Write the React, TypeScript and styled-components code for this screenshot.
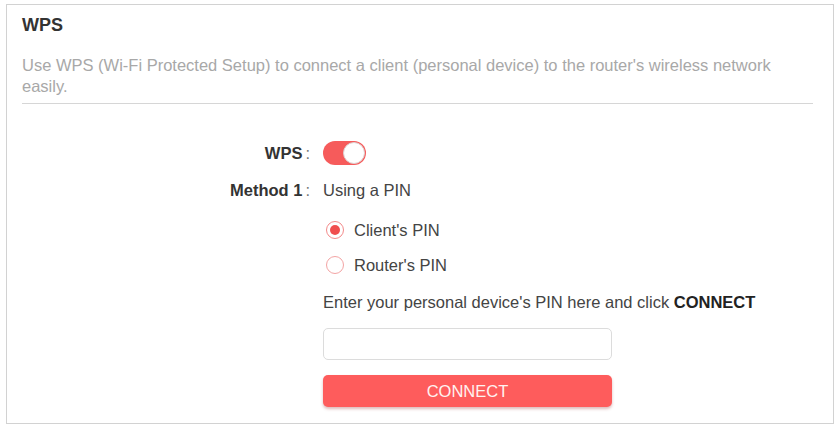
import styled, { createGlobalStyle } from "styled-components";

const GlobalStyle = createGlobalStyle`
  body {
    margin: 0;
    background: #ffffff;
    font-family: "Liberation Sans", Arial, sans-serif;
  }
`;

export default function App() {
  return (
    <>
      <GlobalStyle />
      <Page>
        <Card>
          <Title>WPS</Title>
          <Description>
            Use WPS (Wi-Fi Protected Setup) to connect a client (personal device) to the router's wireless network easily.
          </Description>
          <Divider />
          <Form>
            <Row top={37}>
              <Label>WPS<Colon>:</Colon></Label>
              <Toggle on>
                <Knob />
              </Toggle>
            </Row>
            <Row top={13}>
              <Label>Method 1<Colon>:</Colon></Label>
              <Value>Using a PIN</Value>
            </Row>
            <Row top={16}>
              <Label />
              <RadioOption>
                <Radio checked />
                Client's PIN
              </RadioOption>
            </Row>
            <Row top={11}>
              <Label />
              <RadioOption>
                <Radio />
                Router's PIN
              </RadioOption>
            </Row>
            <Row top={13}>
              <Label />
              <Value>
                Enter your personal device's PIN here and click <b>CONNECT</b>
              </Value>
            </Row>
            <Row top={14} h={32}>
              <Label />
              <PinInput type="text" />
            </Row>
            <Row top={15} h={32}>
              <Label />
              <ConnectButton>CONNECT</ConnectButton>
            </Row>
          </Form>
        </Card>
      </Page>
    </>
  );
}

const Page = styled.div`
  padding: 4px 4px 0 6px;
`;

const Card = styled.div`
  box-sizing: border-box;
  width: 828px;
  height: 420px;
  border: 1px solid #d2d2d2;
  padding: 9px 20px 0 15px;
`;

const Title = styled.h2`
  margin: 0;
  font-size: 18px;
  line-height: 22px;
  font-weight: bold;
  color: #333;
`;

const Description = styled.p`
  margin: 19px 0 0;
  font-size: 16.5px;
  line-height: 21px;
  color: #a8a8a8;
`;

const Divider = styled.div`
  margin-top: 6px;
  height: 1px;
  background: #d6d6d6;
`;

const Form = styled.div`
  display: flex;
  flex-direction: column;
`;

interface RowProps {
  top: number;
  h?: number;
}

const Row = styled.div<RowProps>`
  display: grid;
  grid-template-columns: 288px 1fr;
  column-gap: 13px;
  align-items: center;
  margin-top: ${({ top }) => top}px;
  height: ${({ h }) => h || 24}px;
`;

const Label = styled.div`
  text-align: right;
  font-size: 16.5px;
  font-weight: bold;
  color: #333;
`;

const Colon = styled.span`
  font-weight: normal;
  color: #777;
  margin-left: 3px;
`;

const Value = styled.div`
  font-size: 16.5px;
  color: #444;
  white-space: nowrap;

  b {
    color: #222;
  }
`;

interface ToggleProps {
  on?: boolean;
}

const Toggle = styled.div<ToggleProps>`
  position: relative;
  width: 43px;
  height: 24px;
  border-radius: 12px;
  background: ${({ on }) => (on ? "#f65b5b" : "#cccccc")};
`;

const Knob = styled.span`
  position: absolute;
  top: 1px;
  right: 1px;
  width: 20px;
  height: 20px;
  border-radius: 50%;
  background: #fff;
  border: 1px solid #ddd0d0;
`;

const RadioOption = styled.label`
  display: flex;
  align-items: center;
  gap: 10px;
  font-size: 16.5px;
  color: #444;
`;

interface RadioProps {
  checked?: boolean;
}

const Radio = styled.span<RadioProps>`
  box-sizing: border-box;
  width: 18px;
  height: 18px;
  margin-left: 3px;
  border-radius: 50%;
  border: 1.5px solid ${({ checked }) => (checked ? "#f38a8a" : "#f3a4a4")};
  display: flex;
  align-items: center;
  justify-content: center;

  &::after {
    content: "";
    display: ${({ checked }) => (checked ? "block" : "none")};
    width: 10px;
    height: 10px;
    border-radius: 50%;
    background: #f04e4e;
  }
`;

const PinInput = styled.input`
  box-sizing: border-box;
  width: 289px;
  height: 32px;
  border: 1px solid #dcdcdc;
  border-radius: 5px;
  outline: none;
  background: #fff;
  font-size: 16px;
  padding: 0 10px;
`;

const ConnectButton = styled.button`
  box-sizing: border-box;
  width: 289px;
  height: 32px;
  border: none;
  border-radius: 5px;
  background: #fe5c5c;
  color: #fff2f0;
  font-family: "Liberation Sans", Arial, sans-serif;
  font-size: 16.5px;
  box-shadow: 0 2px 3px rgba(160, 60, 60, 0.35);
  cursor: pointer;
`;
